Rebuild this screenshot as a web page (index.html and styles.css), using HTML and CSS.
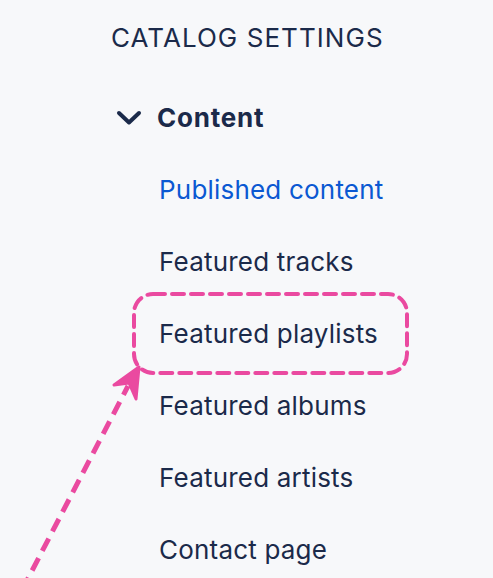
FILE: index.html
```html
<!DOCTYPE html>
<html lang="en">
<head>
<meta charset="utf-8">
<title>Catalog settings</title>
<link rel="stylesheet" href="styles.css">
</head>
<body>
<nav class="sidebar">
  <h2 class="title">CATALOG SETTINGS</h2>
  <div class="group-header">
    <svg class="chevron" width="26" height="16" viewBox="0 0 26 16" aria-hidden="true">
      <polyline points="3,3 13,12.5 23,3" fill="none" stroke="#1b2a4a" stroke-width="4" stroke-linecap="round" stroke-linejoin="round"/>
    </svg>
    <span class="group-label">Content</span>
  </div>
  <ul class="items">
    <li class="item active">Published content</li>
    <li class="item">Featured tracks</li>
    <li class="item">Featured playlists</li>
    <li class="item">Featured albums</li>
    <li class="item">Featured artists</li>
    <li class="item">Contact page</li>
  </ul>
</nav>
<svg class="annotation" width="493" height="578" viewBox="0 0 493 578" aria-hidden="true">
  <rect x="134" y="294" width="273" height="79" rx="19" ry="19" fill="none" stroke="#ea4aa0" stroke-width="4" stroke-dasharray="12 7" stroke-linecap="round"/>
  <line x1="22" y1="590" x2="128" y2="386" stroke="#ea4aa0" stroke-width="5" stroke-dasharray="14 8"/>
  <polygon points="114,385 139,367 136,399 129,383" fill="#ea4aa0" stroke="#ea4aa0" stroke-width="3" stroke-linejoin="round"/>
</svg>
</body>
</html>
```

FILE: styles.css
```css
html, body {
  margin: 0;
  padding: 0;
  background: #f7f8fa;
}

body {
  width: 493px;
  height: 578px;
  overflow: hidden;
  position: relative;
  font-family: Inter, "Noto Sans", "Liberation Sans", sans-serif;
  color: #1b2a4a;
}

.sidebar {
  padding-left: 111px;
  padding-top: 2px;
}

.title {
  margin: 0;
  font-size: 26px;
  font-weight: 400;
  line-height: 72px;
  letter-spacing: 1.05px;
}

.group-header {
  display: flex;
  align-items: center;
  height: 72px;
  margin-top: 8px;
  margin-left: 5px;
  gap: 15px;
}

.chevron {
  display: block;
  flex: none;
}

.group-label {
  font-size: 26px;
  font-weight: 700;
  line-height: 72px;
  letter-spacing: 0.8px;
}

.items {
  list-style: none;
  margin: 0;
  padding: 0 0 0 48px;
}

.item {
  font-size: 26px;
  line-height: 72px;
  height: 72px;
  letter-spacing: 0.2px;
}

.item.active {
  color: #0b58d2;
}

.annotation {
  position: absolute;
  left: 0;
  top: 0;
  pointer-events: none;
}
```
